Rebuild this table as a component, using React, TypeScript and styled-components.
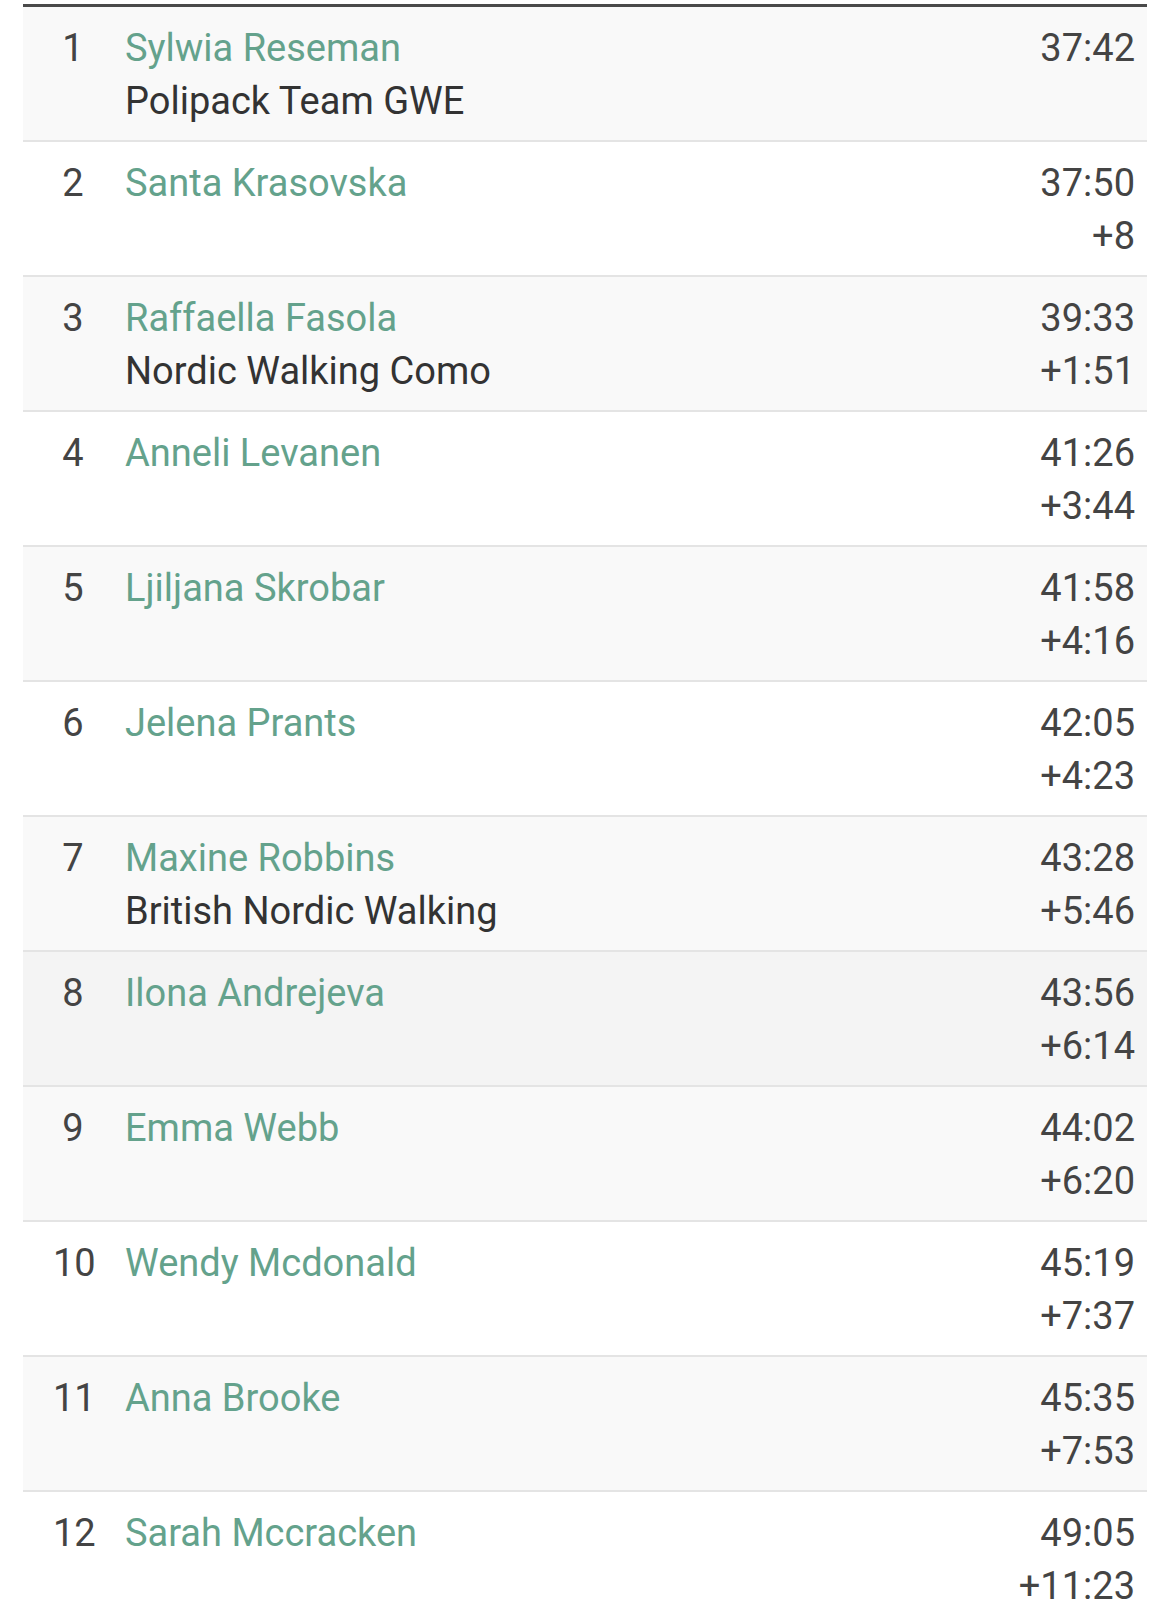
import React from "react";
import styled, { createGlobalStyle } from "styled-components";

const Global = createGlobalStyle`
  html, body { margin: 0; padding: 0; background: #ffffff; }
  body { font-family: Roboto, "Liberation Sans", Arial, sans-serif; }
`;

const Page = styled.div`
  padding: 4px 23px 0 23px;
  width: 1124px;
`;

const Table = styled.div`
  border-top: 3px solid #4a4a4a;
  display: flex;
  flex-direction: column;
`;

const Row = styled.div<{ $shade: string }>`
  display: grid;
  grid-template-columns: 40px 1fr auto;
  column-gap: 32px;
  padding: 15px 12px 12px 30px;
  background: ${(p) => p.$shade};
  border-bottom: 2px solid #e4e4e4;
  font-size: 38px;
  line-height: 53px;
`;

const Rank = styled.div`
  color: #444444;
  text-align: center;
`;

const Athlete = styled.div`
  display: flex;
  flex-direction: column;
  min-height: 106px;
`;

const Name = styled.span`
  color: #64a28c;
`;

const Team = styled.span`
  color: #333333;
`;

const Times = styled.div`
  display: flex;
  flex-direction: column;
  align-items: flex-end;
  color: #444444;
`;

type Result = { rank: number; name: string; team?: string; time: string; gap?: string };

const results: Result[] = [
  { rank: 1, name: "Sylwia Reseman", team: "Polipack Team GWE", time: "37:42" },
  { rank: 2, name: "Santa Krasovska", time: "37:50", gap: "+8" },
  { rank: 3, name: "Raffaella Fasola", team: "Nordic Walking Como", time: "39:33", gap: "+1:51" },
  { rank: 4, name: "Anneli Levanen", time: "41:26", gap: "+3:44" },
  { rank: 5, name: "Ljiljana Skrobar", time: "41:58", gap: "+4:16" },
  { rank: 6, name: "Jelena Prants", time: "42:05", gap: "+4:23" },
  { rank: 7, name: "Maxine Robbins", team: "British Nordic Walking", time: "43:28", gap: "+5:46" },
  { rank: 8, name: "Ilona Andrejeva", time: "43:56", gap: "+6:14" },
  { rank: 9, name: "Emma Webb", time: "44:02", gap: "+6:20" },
  { rank: 10, name: "Wendy Mcdonald", time: "45:19", gap: "+7:37" },
  { rank: 11, name: "Anna Brooke", time: "45:35", gap: "+7:53" },
  { rank: 12, name: "Sarah Mccracken", time: "49:05", gap: "+11:23" },
];

const shadeFor = (rank: number) => {
  if (rank === 8) return "#f4f4f4";
  return rank % 2 === 1 ? "#f9f9f9" : "#ffffff";
};

export default function App() {
  return (
    <>
      <Global />
      <Page>
        <Table>
          {results.map((r) => (
            <Row key={r.rank} $shade={shadeFor(r.rank)}>
              <Rank>{r.rank}</Rank>
              <Athlete>
                <Name>{r.name}</Name>
                {r.team && <Team>{r.team}</Team>}
              </Athlete>
              <Times>
                <span>{r.time}</span>
                {r.gap && <span>{r.gap}</span>}
              </Times>
            </Row>
          ))}
        </Table>
      </Page>
    </>
  );
}
